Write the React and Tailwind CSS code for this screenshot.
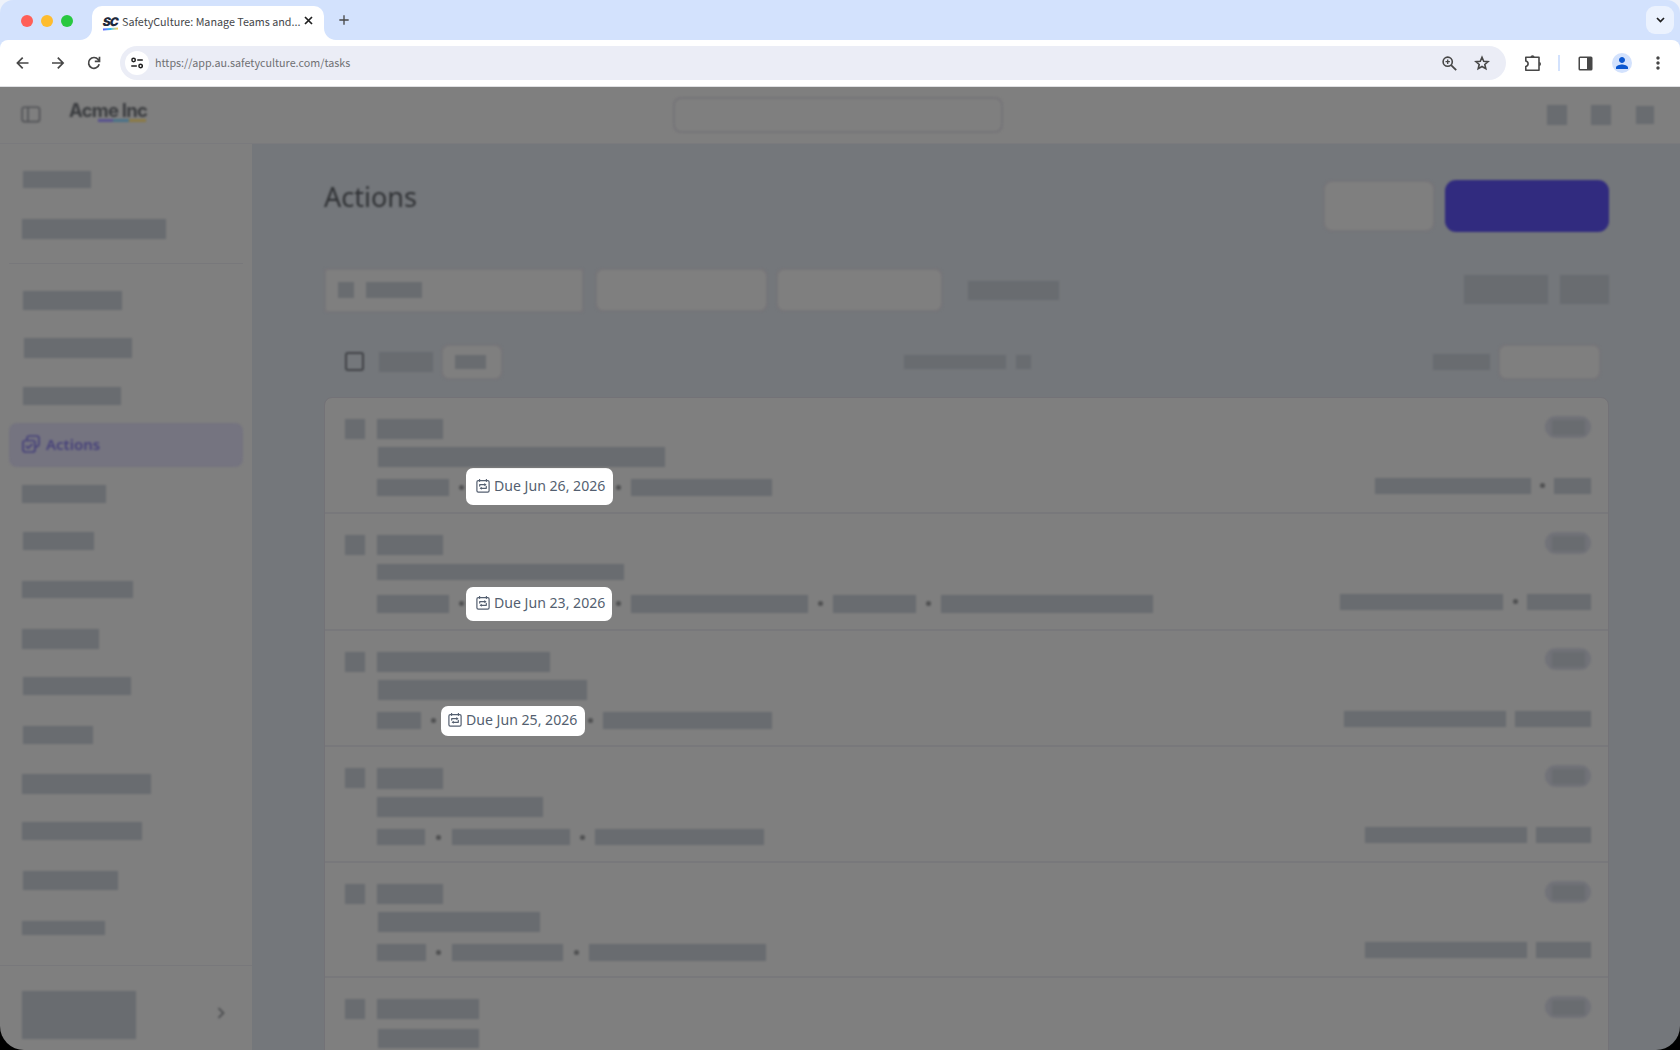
import React from 'react';
import { MdMoreVert, MdPerson, MdAdd, MdChevronRight } from 'react-icons/md';

// Class strings are kept whole so Tailwind can pick them up
const navTop = ['mt-[27px] ml-[23px] w-[68px] h-[17px]', 'mt-[31px] ml-[22px] w-36 h-5'];

const navBeforeActive = [
    'mt-[27px] ml-[23px] w-[99px] h-[19px]',
    'mt-[28px] ml-[24px] w-[108px] h-5',
    'mt-[29px] ml-[23px] w-[98px] h-[18px]',
];

const navAfterActive = [
    'mt-[18px] ml-[22px] w-[84px] h-[18px]',
    'mt-[29px] ml-[23px] w-[71px] h-[18px]',
    'mt-[31px] ml-[22px] w-[111px] h-[17px]',
    'mt-[31px] ml-[22px] w-[77px] h-5',
    'mt-[28px] ml-[23px] w-[108px] h-[18px]',
    'mt-[31px] ml-[23px] w-[70px] h-[18px]',
    'mt-[30px] ml-[22px] w-[129px] h-5',
    'mt-[28px] ml-[22px] w-[120px] h-[18px]',
    'mt-[31px] ml-[23px] w-[95px] h-[19px]',
    'mt-[31px] ml-[22px] w-[83px] h-[14px]',
];

const rows = [
    {
        row: 'h-[116px]',
        left: 'pt-[21px]',
        chip: 'w-[66px] h-5',
        title: 'mt-2 ml-[33px] w-[287px] h-5',
        meta: 'mt-3',
        first: 'w-[72px] h-[17px]',
        due: 'Due Jun 26, 2026',
        pill: '-mt-[11px] h-[37px] w-[147px] pl-[10px] pb-px',
        pillGap: 'w-[17px] pr-[2px]',
        items: [{ dot: 'ml-[3px] mr-[10px]', bar: 'w-[141px] h-[17px]' }],
        right: 'pt-[18px]',
        rightMeta: 'mt-[41px]',
        rightBars: ['w-[156px]', 'w-[37px]'],
        rightGap: 'w-[23px]',
        rightDot: true,
    },
    {
        row: 'h-[117px]',
        left: 'pt-[21px]',
        chip: 'w-[66px] h-5',
        title: 'mt-[9px] ml-8 w-[247px] h-4',
        meta: 'mt-[15px]',
        first: 'w-[72px] h-[18px]',
        due: 'Due Jun 23, 2026',
        pill: '-mt-2 h-[34px] w-[146px] pl-[10px] pb-[2px]',
        pillGap: 'w-[17px] pr-[2px]',
        items: [
            { dot: 'ml-[4px] mr-[10px]', bar: 'w-[177px] h-[18px]' },
            { dot: 'ml-[10px] mr-[10px]', bar: 'w-[83px] h-[18px]' },
            { dot: 'ml-[10px] mr-[10px]', bar: 'w-[212px] h-[18px]' },
        ],
        right: 'pt-[18px]',
        rightMeta: 'mt-[41px]',
        rightBars: ['w-[163px]', 'w-16'],
        rightGap: 'w-6',
        rightDot: true,
    },
    {
        row: 'h-[116px]',
        left: 'pt-[21px]',
        chip: 'w-[173px] h-5',
        title: 'mt-2 ml-[33px] w-[209px] h-5',
        meta: 'mt-3',
        first: 'w-11 h-[17px]',
        due: 'Due Jun 25, 2026',
        pill: '-mt-[6px] h-[30px] w-36 pl-[7px] pb-[3px]',
        pillGap: 'w-5 pr-[5px]',
        items: [{ dot: 'ml-[3px] mr-[10px]', bar: 'w-[169px] h-[17px]' }],
        right: 'pt-[17px]',
        rightMeta: 'mt-[42px]',
        rightBars: ['w-[162px]', 'w-[76px]'],
        rightGap: 'w-[9px]',
    },
    {
        row: 'h-[116px]',
        left: 'pt-[21px]',
        chip: 'w-[66px] h-[21px]',
        title: 'mt-2 ml-8 w-[166px] h-5',
        meta: 'mt-3',
        first: 'w-12 h-4',
        items: [
            { dot: 'ml-[11px] mr-[11px]', bar: 'w-[118px] h-4' },
            { dot: 'ml-[10px] mr-[10px]', bar: 'w-[169px] h-4' },
        ],
        right: 'pt-[18px]',
        rightMeta: 'mt-[41px]',
        rightBars: ['w-[162px]', 'w-[55px]'],
        rightGap: 'w-[9px]',
    },
    {
        row: 'h-[115px]',
        left: 'pt-[21px]',
        chip: 'w-[66px] h-5',
        title: 'mt-2 ml-[33px] w-[162px] h-5',
        meta: 'mt-3',
        first: 'w-[49px] h-[17px]',
        items: [
            { dot: 'ml-[10px] mr-[11px]', bar: 'w-[111px] h-[17px]' },
            { dot: 'ml-[11px] mr-[10px]', bar: 'w-[177px] h-[17px]' },
        ],
        right: 'pt-[18px]',
        rightMeta: 'mt-[40px]',
        rightBars: ['w-[162px]', 'w-[55px]'],
        rightGap: 'w-[9px]',
    },
    {
        row: 'h-[116px]',
        left: 'pt-[21px]',
        chip: 'w-[102px] h-5',
        title: 'mt-[10px] ml-[33px] w-[101px] h-[19px]',
        right: 'pt-[18px]',
    },
];

const Bar = ({ className }) => <div className={`shrink-0 bg-[#696c70] blur-[0.8px] ${className}`} />;

const Dot = ({ className = '' }) => (
    <div className={`mt-[6px] h-[5px] w-[5px] shrink-0 rounded-full bg-[#505152] blur-[0.8px] ${className}`} />
);

const Field = ({ className, children }) => (
    <div className={`shrink-0 border-2 border-[#767579] bg-[#7f7f7f] blur-[0.8px] ${className}`}>{children}</div>
);

const RecurringIcon = () => (
    <svg width="14" height="14" viewBox="0 0 14 14" fill="none" stroke="#545f70" strokeWidth="1.2" strokeLinecap="round" strokeLinejoin="round">
        <rect x="0.9" y="1.6" width="12.2" height="11.6" rx="1.4" />
        <path d="M3.6 0.5v1.8M10.4 0.5v1.8" />
        <path d="M3.7 7.1V5.7h5.4M10.3 7.4v1.9H5" />
        <path d="M8.3 4.1l2.3 1.6-2.3 1.5zM5.8 7.7L3.5 9.3l2.3 1.5z" fill="#545f70" stroke="none" />
    </svg>
);

const DuePill = ({ className, text }) => (
    <div className={`flex shrink-0 items-center rounded-[7px] bg-white ${className}`}>
        <RecurringIcon />
        <span className="mt-px ml-1 text-[14.1px] leading-none whitespace-nowrap text-[#545f70]">{text}</span>
    </div>
);

const ActionRow = ({ data }) => (
    <div className={`flex shrink-0 justify-between border-b-2 border-[#78787b] pr-[17px] pl-5 ${data.row}`}>
        <div className={data.left}>
            <div className="flex gap-3">
                <Bar className="h-5 w-5" />
                <Bar className={data.chip} />
            </div>
            <Bar className={data.title} />
            {data.meta && (
                <div className={`ml-8 flex h-[17px] items-start ${data.meta}`}>
                    <Bar className={data.first} />
                    {data.due && (
                        <>
                            <div className={`flex shrink-0 justify-end ${data.pillGap}`}>
                                <Dot />
                            </div>
                            <DuePill className={data.pill} text={data.due} />
                        </>
                    )}
                    {data.items.map((item, i) => (
                        <React.Fragment key={i}>
                            <Dot className={item.dot} />
                            <Bar className={item.bar} />
                        </React.Fragment>
                    ))}
                </div>
            )}
        </div>
        <div className={`flex flex-col items-end ${data.right}`}>
            <div className="flex h-[22px] w-[46px] items-center justify-center rounded-full bg-[#727379] blur-[0.8px]">
                <div className="h-[15px] w-[33px] bg-[#696c70] blur-[1px]" />
            </div>
            {data.rightBars && (
                <div className={`-translate-y-px flex ${data.rightMeta}`}>
                    <Bar className={`h-4 ${data.rightBars[0]}`} />
                    <div className={`flex justify-center ${data.rightGap}`}>{data.rightDot && <Dot className="-translate-y-px" />}</div>
                    <Bar className={`h-4 ${data.rightBars[1]}`} />
                </div>
            )}
        </div>
    </div>
);

const BrowserChrome = () => (
    <div className="h-[87px] shrink-0 bg-[#eef2fa] font-['Noto_Sans_CJK_SC',sans-serif]">
        <div className="rounded-t-[13px] bg-[#d3e2fd]">
            {/* Tab strip */}
            <div className="flex h-10 items-end">
                <div className="mb-[13px] ml-[21px] flex gap-2">
                    <div className="h-3 w-3 rounded-full bg-[#ff5f57]" />
                    <div className="h-3 w-3 rounded-full bg-[#febc2e]" />
                    <div className="h-3 w-3 rounded-full bg-[#28c840]" />
                </div>
                <svg className="ml-[7px] shrink-0" width="12" height="12" viewBox="0 0 12 12">
                    <path d="M12 0v12H0C6.6 12 12 6.6 12 0z" fill="#fff" />
                </svg>
                <div className="flex h-[34px] w-[232px] items-center rounded-t-[10px] bg-white pl-[11px]">
                    <div className="-mt-px flex w-[17px] shrink-0 flex-col">
                        <span className="-skew-x-12 font-['Inter',sans-serif] text-[12px] leading-[11px] font-black tracking-[-1px] text-[#1f2a3c]">SC</span>
                        <div className="mt-px h-[2px] w-[15px] -rotate-3 bg-linear-to-r from-[#6559ff] via-[#2bc8f2] to-[#ffd13b]" />
                    </div>
                    <span className="-mt-px ml-[2px] w-[180px] shrink-0 text-[10.75px] whitespace-nowrap text-[#45474a]">
                        SafetyCulture: Manage Teams and...
                    </span>
                    <svg className="-mt-[6px] ml-[2px] shrink-0" width="9" height="9" viewBox="0 0 9 9" stroke="#1f1f1f" strokeWidth="1.7">
                        <path d="M1 1l7 7M8 1L1 8" />
                    </svg>
                </div>
                <svg className="shrink-0" width="12" height="12" viewBox="0 0 12 12">
                    <path d="M0 0v12h12C5.4 12 0 6.6 0 0z" fill="#fff" />
                </svg>
                <MdAdd className="mb-[12px] text-[16px] text-[#474747]" />
                <div className="mr-[6px] mb-[6px] ml-auto flex h-7 w-7 items-center justify-center rounded-[9px] bg-[#ebf2fe]">
                    <svg width="9" height="6" viewBox="0 0 9 6" fill="none" stroke="#1f1f1f" strokeWidth="1.7">
                        <path d="M1 1l3.5 3.5L8 1" />
                    </svg>
                </div>
            </div>

            {/* Toolbar */}
            <div className="flex h-[47px] items-center rounded-t-[8px] border-b border-[#dfe0e3] bg-white text-[#474747]">
                <svg className="ml-4" width="13" height="12" viewBox="0 0 13 12" fill="none" stroke="currentColor" strokeWidth="1.7">
                    <path d="M12.5 6H1.5M6.7 0.7L1.4 6l5.3 5.3" />
                </svg>
                <svg className="ml-[23px]" width="13" height="12" viewBox="0 0 13 12" fill="none" stroke="currentColor" strokeWidth="1.7">
                    <path d="M0 6h11M5.8 0.7L11.1 6l-5.3 5.3" />
                </svg>
                <svg className="ml-[22px]" width="14" height="14" viewBox="0 0 14 14" fill="none" stroke="currentColor" strokeWidth="1.7">
                    <path d="M12.2 8.3A5.4 5.4 0 1 1 11.2 3.5L12.3 4.8M12.5 0.7v4.7H7.8" />
                </svg>
                <div className="ml-[19px] flex h-[34px] w-[1386px] items-center rounded-full bg-[#ebedf6] pl-[5px]">
                    <div className="flex h-6 w-6 items-center justify-center rounded-full bg-white">
                        <svg width="12" height="12" viewBox="0 0 12 12" fill="none" stroke="#1f1f1f" strokeWidth="1.5" strokeLinecap="round">
                            <circle cx="2.6" cy="3" r="1.7" />
                            <path d="M6.8 3h4.5M0.8 9h4.5" />
                            <circle cx="9.6" cy="9" r="1.7" />
                        </svg>
                    </div>
                    <span className="mt-px ml-[6px] text-[10.75px] text-[#6f7073]">https://app.au.safetyculture.com/tasks</span>
                    <svg className="ml-auto" width="15" height="15" viewBox="0 0 15 15" fill="none" stroke="currentColor">
                        <circle cx="5.7" cy="5.7" r="4.6" strokeWidth="1.6" />
                        <path d="M9.1 9.1l5.1 5.1" strokeWidth="1.8" />
                        <path d="M5.7 3.5v4.4M3.5 5.7h4.4" strokeWidth="1.3" />
                    </svg>
                    <svg className="mr-4 ml-[17px]" width="16" height="16" viewBox="0 0 16 16" fill="none" stroke="currentColor" strokeWidth="1.6">
                        <path d="M8 2.2l1.7 4 4.4.4-3.3 2.9 1 4.2L8 11.500l-3.800 2.200 1-4.200L1.900 6.600l4.400-.4z" />
                    </svg>
                </div>
                <svg className="ml-[18px]" width="18" height="18" viewBox="0 0 18 18" fill="none" stroke="#474747" strokeWidth="1.6">
                    <path d="M1.8 3.3h13.2v12.9H1.8v-3.700c1.500-.4 2.300-1.400 2.300-2.800S3.300 7.400 1.800 7z" strokeLinejoin="round" />
                    <path d="M6.5 3a2 1.800 0 0 1 4 0zM15.200 7.900a1.800 2 0 0 1 0 4z" fill="#474747" stroke="none" />
                </svg>
                <div className="ml-4 h-4 w-[2px] bg-[#d3e2fd]" />
                <svg className="ml-[18px]" width="15" height="15" viewBox="0 0 15 15">
                    <rect x="1.25" y="1.25" width="12.5" height="12.5" rx="0.8" fill="none" stroke="#474747" strokeWidth="1.5" />
                    <path d="M9 1h5v13H9z" fill="#474747" />
                </svg>
                <div className="ml-[19px] flex h-5 w-5 items-center justify-center rounded-full bg-[#d3e2fd]">
                    <MdPerson className="text-[18px] text-[#0b57d0]" />
                </div>
                <MdMoreVert className="ml-[16px] text-[20px]" />
            </div>
        </div>
    </div>
);

const AppHeader = () => (
    <div className="flex h-[57px] shrink-0 border-b border-[#7a7a7d] bg-[#7f7f7f]">
        <div className="flex w-[673px] blur-[0.8px]">
            <svg className="mt-[19px] ml-[21px]" width="20" height="17" viewBox="0 0 20 17" fill="none" stroke="#515256" strokeWidth="1.6">
                <rect x="1.2" y="1.2" width="17.4" height="14.4" rx="2.2" />
                <path d="M7 1.2v14.4" />
            </svg>
            <div className="mt-[15px] ml-7">
                <div className="font-['Inter',sans-serif] text-[18.5px] leading-[17px] font-bold tracking-[-0.75px] whitespace-nowrap text-[#3b3d40]">Acme Inc</div>
                <div className="ml-[29px] flex h-[3px] w-12">
                    <div className="w-[15px] bg-[#58528f]" />
                    <div className="w-4 bg-[#4a7289]" />
                    <div className="w-[17px] bg-[#8b7a45]" />
                </div>
            </div>
        </div>
        <Field className="mt-[10px] h-[36px] w-[330px] rounded-lg" />
        <div className="mt-[18px] mr-[26px] ml-auto flex">
            <Bar className="h-5 w-5" />
            <Bar className="ml-6 h-5 w-5" />
            <Bar className="mt-px ml-[25px] h-[18px] w-[18px]" />
        </div>
    </div>
);

const Sidebar = () => (
    <div className="w-[252px] shrink-0 bg-[#7f7f7f]">
        {navTop.map((item) => (
            <Bar key={item} className={item} />
        ))}
        <div className="mx-[9px] mt-6 h-px bg-[#78787b]" />
        {navBeforeActive.map((item) => (
            <Bar key={item} className={item} />
        ))}
        <div className="mx-[9px] mt-[18px] flex h-11 items-center rounded-lg bg-[#757480] pl-[13px] blur-[0.8px]">
            <svg className="-mt-[2px]" width="18" height="18" viewBox="0 0 18 18" fill="none" stroke="#46417a" strokeWidth="1.7" strokeLinecap="round" strokeLinejoin="round">
                <path d="M5 4.5V3.3C5 2 6 1 7.3 1h7.4C16 1 17 2 17 3.3v5.4c0 1.5-1.3 2.8-3 3.3" />
                <path d="M3.3 5.5h7.4c1.3 0 2.3 1 2.3 2.3v6.900c0 1.300-1 2.300-2.300 2.300H3.300C2 17 1 16 1 14.700V7.800c0-1.300 1-2.300 2.300-2.300z" />
                <path d="M4.3 11.3l1.9 1.9 3.8-3.8" />
            </svg>
            <span className="-mt-[2px] ml-[6px] text-[15px] font-semibold text-[#46417a]">Actions</span>
        </div>
        {navAfterActive.map((item) => (
            <Bar key={item} className={item} />
        ))}
        <div className="mt-[30px] h-px bg-[#78787b]" />
        <div className="mt-[25px] flex items-center">
            <Bar className="ml-[22px] h-12 w-[114px]" />
            <MdChevronRight className="mt-[-5px] mr-5 ml-auto text-[22px] text-[#4b4d50] blur-[0.8px]" />
        </div>
    </div>
);

const Main = () => (
    <div className="flex flex-1 flex-col overflow-hidden bg-[#74777b] pr-[71px] pl-[72px]">
        <div className="mt-9 flex h-[52px] shrink-0">
            <h1 className="-mt-px text-[27px] leading-9 font-normal text-[#303235] blur-[0.8px]">Actions</h1>
            <Field className="ml-auto h-[52px] w-[112px] rounded-[9px]" />
            <div className="ml-[10px] h-[52px] w-[164px] rounded-[11px] bg-[#312b7f] blur-[0.8px]" />
        </div>

        {/* Filters */}
        <div className="mt-[36px] flex shrink-0">
            <Field className="flex h-[45px] w-[260px] rounded-[4px] pt-3 pl-3">
                <div className="h-4 w-4 bg-[#696c70]" />
                <div className="ml-3 h-4 w-14 bg-[#696c70]" />
            </Field>
            <Field className="ml-[11px] h-[44px] w-[173px] rounded-lg" />
            <Field className="ml-[8px] h-[44px] w-[167px] rounded-lg" />
            <Bar className="mt-[13px] ml-[25px] h-[19px] w-[91px]" />
            <Bar className="mt-[7px] ml-auto h-[29px] w-[84px]" />
            <Bar className="mt-[7px] ml-3 h-[29px] w-[49px]" />
        </div>

        {/* List toolbar */}
        <div className="mt-[30px] flex h-[37px] shrink-0 items-center pr-2">
            <div className="ml-[21px] h-[19px] w-[19px] rounded-[3px] border-2 border-[#414347] blur-[0.8px]" />
            <Bar className="ml-[15px] h-5 w-[54px]" />
            <Field className="ml-[8px] flex h-[36px] w-[62px] items-center justify-center rounded-lg pr-[3px]">
                <div className="h-[14px] w-[31px] bg-[#696c70]" />
            </Field>
            <Bar className="ml-[401px] h-[14px] w-[102px]" />
            <Bar className="ml-[10px] h-[14px] w-[15px]" />
            <Bar className="ml-auto h-4 w-[57px]" />
            <Field className="ml-2 h-9 w-[103px] rounded-lg" />
        </div>

        <div className="mt-[17px] flex shrink-0 flex-col rounded-t-lg border border-[#737277] bg-[#7f7f7f]">
            {rows.map((data, i) => (
                <ActionRow key={i} data={data} />
            ))}
        </div>
    </div>
);

export default function App() {
    return (
        <div className="flex h-[1050px] w-[1680px] flex-col overflow-hidden bg-black font-['Noto_Sans',sans-serif]">
            <BrowserChrome />
            <div className="flex min-h-0 flex-1 flex-col overflow-hidden rounded-b-[24px]">
                <AppHeader />
                <div className="flex min-h-0 flex-1">
                    <Sidebar />
                    <Main />
                </div>
            </div>
        </div>
    );
}
